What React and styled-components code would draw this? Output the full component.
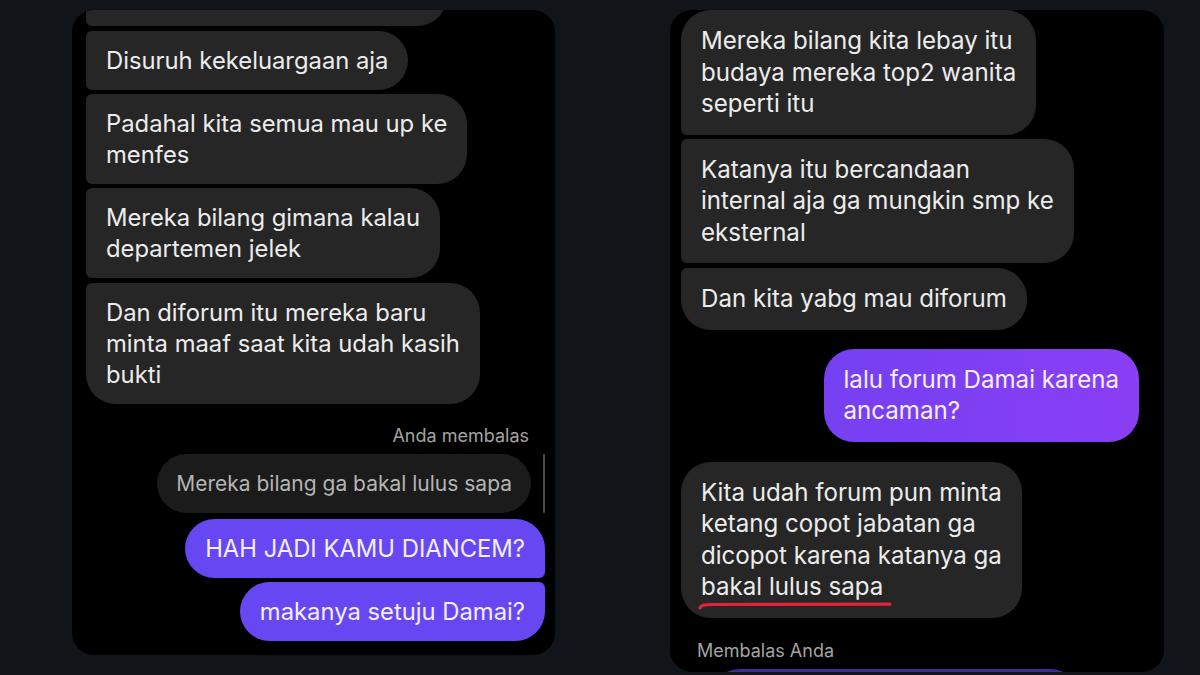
import React from "react";
import styled, { createGlobalStyle, css } from "styled-components";

const GlobalStyle = createGlobalStyle`
  html, body { margin: 0; padding: 0; background: #111418; }
  body { font-family: Inter, "Noto Sans", sans-serif; -webkit-font-smoothing: antialiased; }
`;

const Page = styled.div`
  width: 1200px;
  height: 675px;
  box-sizing: border-box;
  background: #111418;
  display: flex;
  align-items: flex-start;
  padding: 10px 0 0 72px;
  gap: 115px;
  overflow: hidden;
`;

const Panel = styled.div`
  box-sizing: border-box;
  background: #000;
  border-radius: 22px;
  overflow: hidden;
  display: flex;
  flex-direction: column;
  flex-shrink: 0;
  ${(p) =>
    p.$side === "left"
      ? css`
          width: 483px;
          height: 645px;
          justify-content: flex-end;
          padding: 0 10px 14px 14px;
          font-size: 23.8px;
        `
      : css`
          width: 494px;
          height: 662px;
          justify-content: flex-start;
          padding: 0 25px 0 11px;
          font-size: 24.1px;
        `}
`;

const Row = styled.div`
  display: flex;
  justify-content: ${(p) => (p.$end ? "flex-end" : "flex-start")};
  margin-top: ${(p) => p.$mt ?? 4}px;
  flex-shrink: 0;
`;

const Bubble = styled.div`
  position: relative;
  box-sizing: border-box;
  white-space: pre;
  color: #ececec;
  background: #262626;
  padding: ${(p) => (p.$big ? "15px 20px" : "14px 20px")};
  line-height: ${(p) => (p.$big ? "31.5px" : "31px")};
  border-radius: ${(p) => p.$radius || "30px"};
  ${(p) =>
    p.$out &&
    css`
      background: #6647f2;
      color: #f3efff;
    `}
  ${(p) =>
    p.$grad &&
    css`
      background: linear-gradient(100deg, #7440f2 0%, #8a3ef4 100%);
      color: #f6efff;
    `}
`;

const CutBubble = styled.div`
  width: 361px;
  height: 60px;
  background: #262626;
  border-radius: 30px 30px 30px 6px;
`;

const QuoteRow = styled.div`
  display: flex;
  justify-content: flex-end;
  align-items: stretch;
  gap: 12px;
  margin-top: 8px;
  flex-shrink: 0;
`;

const Quote = styled.div`
  box-sizing: border-box;
  height: 59px;
  display: flex;
  align-items: center;
  padding: 0 19px;
  border-radius: 30px;
  background: #1b1b1b;
  color: #b4b4b4;
  font-size: 21px;
  white-space: pre;
`;

const QuoteBar = styled.div`
  width: 2px;
  background: #4a4a4a;
  border-radius: 1px;
`;

const Label = styled.div`
  flex-shrink: 0;
  font-size: 18px;
  line-height: 20px;
  color: #a3a3a3;
  margin-top: ${(p) => p.$mt || 0}px;
  text-align: ${(p) => (p.$end ? "right" : "left")};
  padding: ${(p) => (p.$end ? "0 16px 0 0" : "0 0 0 16px")};
`;

const Underline = styled.svg`
  position: absolute;
  left: 17px;
  bottom: 8px;
  width: 196px;
  height: 10px;
  overflow: visible;
`;

const TailBubble = styled.div`
  flex-shrink: 0;
  margin: 8px 0 0 29px;
  width: 370px;
  height: 60px;
  border-radius: 30px;
  background: linear-gradient(180deg, #3a2a9c 0%, #5a3fe0 100%);
`;

const S = "6px";
const L = "30px";
const r = (tl, tr, br, bl) => `${tl} ${tr} ${br} ${bl}`;

export default function App() {
  return (
    <>
      <GlobalStyle />
      <Page>
        <Panel $side="left">
          <Row $mt={0}>
            <CutBubble />
          </Row>
          <Row $mt={5}>
            <Bubble $radius={r(S, L, L, S)}>Disuruh kekeluargaan aja</Bubble>
          </Row>
          <Row>
            <Bubble $radius={r(S, L, L, S)}>{"Padahal kita semua mau up ke\nmenfes"}</Bubble>
          </Row>
          <Row>
            <Bubble $radius={r(S, L, L, S)}>{"Mereka bilang gimana kalau\ndepartemen jelek"}</Bubble>
          </Row>
          <Row $mt={5}>
            <Bubble $radius={r(S, L, L, L)}>
              {"Dan diforum itu mereka baru\nminta maaf saat kita udah kasih\nbukti"}
            </Bubble>
          </Row>
          <Label $end $mt={22}>Anda membalas</Label>
          <QuoteRow>
            <Quote>Mereka bilang ga bakal lulus sapa</Quote>
            <QuoteBar />
          </QuoteRow>
          <Row $end $mt={6}>
            <Bubble $out $radius={r(L, L, S, L)}>HAH JADI KAMU DIANCEM?</Bubble>
          </Row>
          <Row $end>
            <Bubble $out $radius={r(L, S, L, L)}>makanya setuju Damai?</Bubble>
          </Row>
        </Panel>

        <Panel $side="right">
          <Row $mt={0}>
            <Bubble $big $radius={r(L, L, L, S)}>
              {"Mereka bilang kita lebay itu\nbudaya mereka top2 wanita\nseperti itu"}
            </Bubble>
          </Row>
          <Row>
            <Bubble $big $radius={r(S, L, L, S)}>
              {"Katanya itu bercandaan\ninternal aja ga mungkin smp ke\neksternal"}
            </Bubble>
          </Row>
          <Row $mt={5}>
            <Bubble $big $radius={r(S, L, L, L)}>Dan kita yabg mau diforum</Bubble>
          </Row>
          <Row $end $mt={19}>
            <Bubble $big $grad $radius={r(L, L, L, L)}>{"lalu forum Damai karena\nancaman?"}</Bubble>
          </Row>
          <Row $mt={20}>
            <Bubble $big $radius={r(L, L, L, L)}>
              {"Kita udah forum pun minta\nketang copot jabatan ga\ndicopot karena katanya ga\nbakal lulus sapa"}
              <Underline viewBox="0 0 196 10">
                <path
                  d="M2 8 C 3 5, 6 4.5, 14 4.5 L 192 4.2"
                  fill="none"
                  stroke="#e3233b"
                  strokeWidth="3.2"
                  strokeLinecap="round"
                />
              </Underline>
            </Bubble>
          </Row>
          <Label $mt={23}>Membalas Anda</Label>
          <TailBubble />
        </Panel>
      </Page>
    </>
  );
}
